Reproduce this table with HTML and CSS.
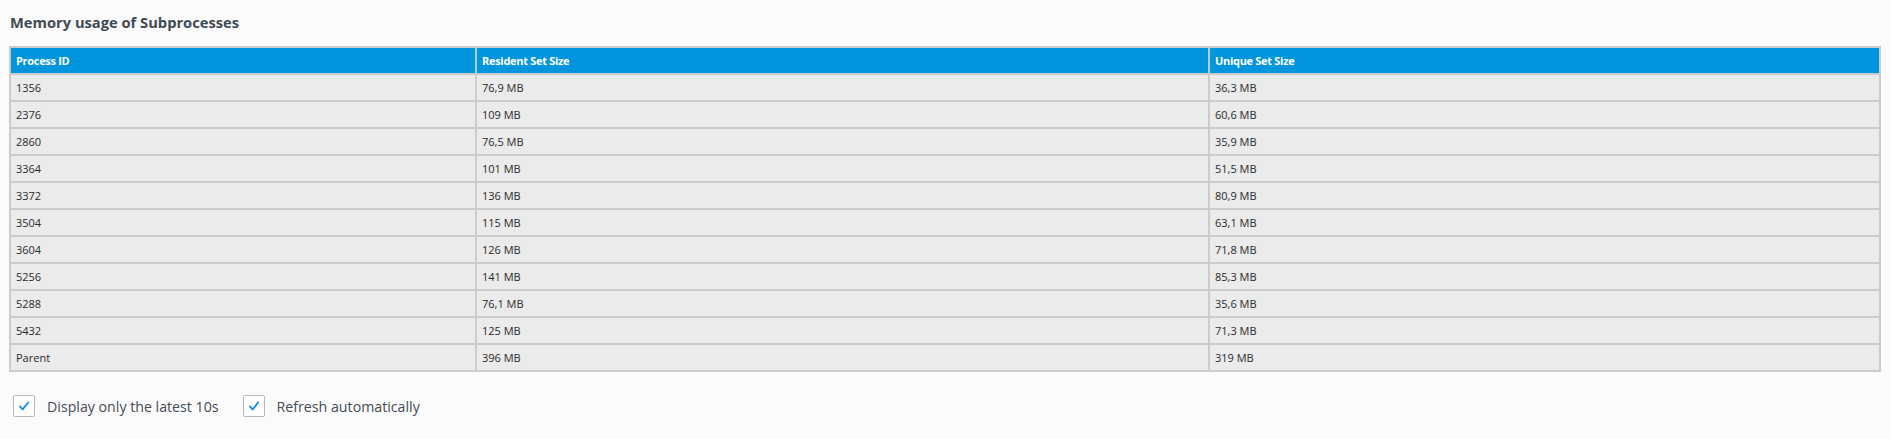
FILE: index.html
```html
<!DOCTYPE html>
<html>
<head>
<meta charset="utf-8">
<link rel="stylesheet" href="styles.css">
</head>
<body>
<div class="page">
  <h2 class="title">Memory usage of Subprocesses</h2>
  <table class="mem">
    <colgroup>
      <col class="c1"><col class="c2"><col class="c3">
    </colgroup>
    <thead>
      <tr><th>Process ID</th><th>Resident Set Size</th><th>Unique Set Size</th></tr>
    </thead>
    <tbody>
      <tr><td>1356</td><td>76,9 MB</td><td>36,3 MB</td></tr>
      <tr><td>2376</td><td>109 MB</td><td>60,6 MB</td></tr>
      <tr><td>2860</td><td>76,5 MB</td><td>35,9 MB</td></tr>
      <tr><td>3364</td><td>101 MB</td><td>51,5 MB</td></tr>
      <tr><td>3372</td><td>136 MB</td><td>80,9 MB</td></tr>
      <tr><td>3504</td><td>115 MB</td><td>63,1 MB</td></tr>
      <tr><td>3604</td><td>126 MB</td><td>71,8 MB</td></tr>
      <tr><td>5256</td><td>141 MB</td><td>85,3 MB</td></tr>
      <tr><td>5288</td><td>76,1 MB</td><td>35,6 MB</td></tr>
      <tr><td>5432</td><td>125 MB</td><td>71,3 MB</td></tr>
      <tr><td>Parent</td><td>396 MB</td><td>319 MB</td></tr>
    </tbody>
  </table>
  <div class="options">
    <label class="opt"><span class="box"><svg viewBox="0 0 22 22" width="22" height="22"><path d="M6.5 11.5 L9.5 14.8 L15.5 7.2" fill="none" stroke="#0c8ee8" stroke-width="2" stroke-linecap="round" stroke-linejoin="round"/></svg></span><span class="lbl">Display only the latest 10s</span></label>
    <label class="opt"><span class="box"><svg viewBox="0 0 22 22" width="22" height="22"><path d="M6.5 11.5 L9.5 14.8 L15.5 7.2" fill="none" stroke="#0c8ee8" stroke-width="2" stroke-linecap="round" stroke-linejoin="round"/></svg></span><span class="lbl">Refresh automatically</span></label>
  </div>
</div>
</body>
</html>
```
FILE: styles.css
```css
html, body {
  margin: 0;
  padding: 0;
  background: #fbfbfb;
}
body {
  font-family: "Open Sans", "Noto Sans", sans-serif;
  color: #2b2b2b;
}
.page {
  padding: 0 10px 0 9px;
}
.title {
  margin: 0;
  padding-top: 12px;
  height: 34px;
  box-sizing: border-box;
  font-size: 14.7px;
  font-weight: 700;
  line-height: 20px;
  color: #414a53;
  padding-left: 1px;
}
.mem {
  margin-top: 12px;
  width: 1872px;
  table-layout: fixed;
  border-collapse: separate;
  border-spacing: 2px;
  background: #cbcbcb;
  font-size: 11px;
}
.c1 { width: 464px; }
.c2 { width: 731px; }
.c3 { width: 669px; }
.mem th, .mem td {
  height: 25px;
  padding: 0 0 0 5px;
  text-align: left;
  vertical-align: middle;
  line-height: 14px;
  white-space: nowrap;
}
.mem th {
  background: #0095dd;
  color: #ffffff;
  font-weight: 700;
  letter-spacing: -0.3px;
}
.mem th + th {
  box-shadow: -2px 0 0 #a9d3ec;
}
.mem td {
  background: #ebebeb;
  color: #2a2a2a;
}
.options {
  display: flex;
  gap: 24px;
  margin-top: 23px;
  padding-left: 4px;
}
.opt {
  display: flex;
  align-items: center;
  gap: 12px;
  font-size: 14.2px;
  color: #444c55;
}
.box {
  width: 20px;
  height: 20px;
  border: 1px solid #b8b8b8;
  border-radius: 2px;
  background: #ffffff;
  display: flex;
  align-items: center;
  justify-content: center;
}
.box svg {
  width: 20px;
  height: 20px;
}
```
